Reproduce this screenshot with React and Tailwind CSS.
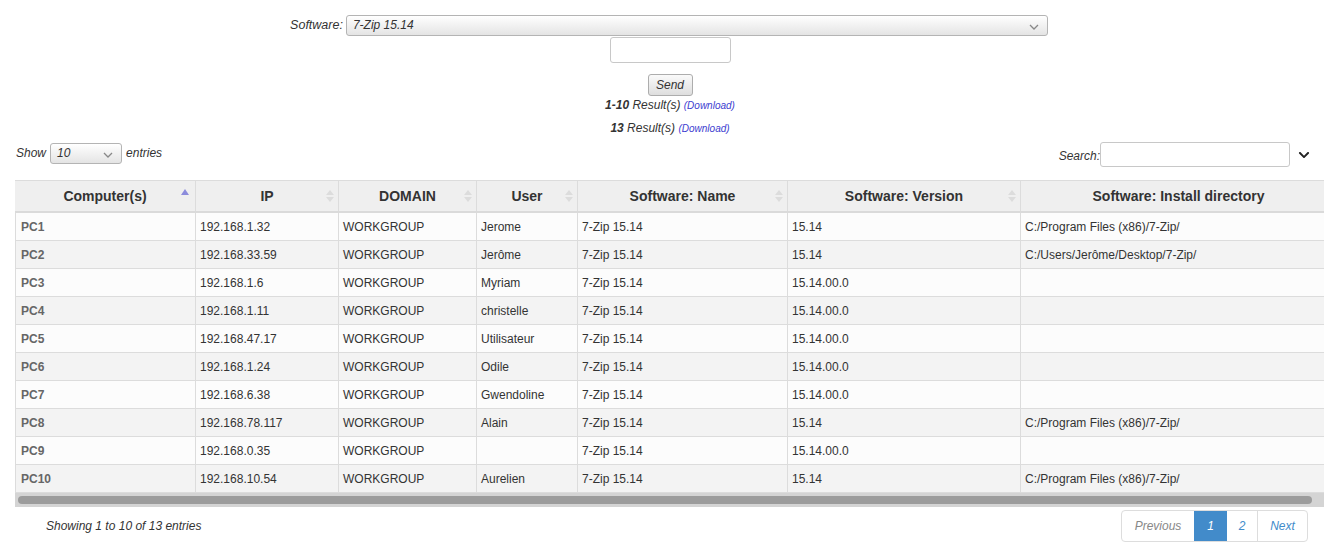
import { FaChevronDown } from "react-icons/fa";

const ROWS = [
  ["PC1", "192.168.1.32", "WORKGROUP", "Jerome", "7-Zip 15.14", "15.14", "C:/Program Files (x86)/7-Zip/"],
  ["PC2", "192.168.33.59", "WORKGROUP", "Jerôme", "7-Zip 15.14", "15.14", "C:/Users/Jerôme/Desktop/7-Zip/"],
  ["PC3", "192.168.1.6", "WORKGROUP", "Myriam", "7-Zip 15.14", "15.14.00.0", ""],
  ["PC4", "192.168.1.11", "WORKGROUP", "christelle", "7-Zip 15.14", "15.14.00.0", ""],
  ["PC5", "192.168.47.17", "WORKGROUP", "Utilisateur", "7-Zip 15.14", "15.14.00.0", ""],
  ["PC6", "192.168.1.24", "WORKGROUP", "Odile", "7-Zip 15.14", "15.14.00.0", ""],
  ["PC7", "192.168.6.38", "WORKGROUP", "Gwendoline", "7-Zip 15.14", "15.14.00.0", ""],
  ["PC8", "192.168.78.117", "WORKGROUP", "Alain", "7-Zip 15.14", "15.14", "C:/Program Files (x86)/7-Zip/"],
  ["PC9", "192.168.0.35", "WORKGROUP", "", "7-Zip 15.14", "15.14.00.0", ""],
  ["PC10", "192.168.10.54", "WORKGROUP", "Aurelien", "7-Zip 15.14", "15.14", "C:/Program Files (x86)/7-Zip/"],
];

const COLS = [
  { label: "Computer(s)", w: "w-[180px]", active: true },
  { label: "IP", w: "w-[143px]" },
  { label: "DOMAIN", w: "w-[138px]" },
  { label: "User", w: "w-[101px]" },
  { label: "Software: Name", w: "w-[210px]" },
  { label: "Software: Version", w: "w-[233px]" },
  { label: "Software: Install directory", w: "w-[316px]" },
];

const SortIcon = ({ active }) => {
  if (active) {
    return (
      <svg width="8" height="12" viewBox="0 0 8 12" className="absolute right-[6px] top-[7px]">
        <path d="M0 7 L4 1 L8 7 Z" fill="#8c8cdc" />
      </svg>
    );
  }
  return (
    <svg width="8" height="14" viewBox="0 0 8 14" className="absolute right-[4px] top-[8px]">
      <path d="M0 6 L4 1 L8 6 Z" fill="#dcdcdc" />
      <path d="M0 8 L4 13 L8 8 Z" fill="#dcdcdc" />
    </svg>
  );
};

const Chevron = () => (
  <svg width="10" height="6" viewBox="0 0 10 6" className="absolute right-[8px] top-[8px]">
    <path d="M1 1 L5 5 L9 1" stroke="#888" strokeWidth="1.3" fill="none" />
  </svg>
);

export default function App() {
  return (
    <div className="w-[1340px] h-[545px] bg-white overflow-hidden font-['Liberation_Sans',Arial,sans-serif] text-[#333]">
      {/* top form */}
      <div className="flex flex-col items-center pt-[15px]">
        <div className="flex items-center gap-[3px] h-[21px] -ml-[2px]">
          <span className="italic text-[12.5px] text-[#333]">Software:</span>
          <div className="relative w-[702px] h-[21px] border border-[#b4b4b4] rounded-[3px] bg-gradient-to-b from-white to-[#e4e4e4] italic text-[12px] pl-[6px] leading-[19px]">
            7-Zip 15.14
            <Chevron />
          </div>
        </div>
        <div className="w-[121px] h-[26px] border border-[#c8c8c8] rounded-[3px] mt-[1px] bg-white" />
        <div className="mt-[11px] w-[45px] h-[22px] border border-[#adadad] rounded-[3px] bg-gradient-to-b from-[#fafafa] to-[#dedede] italic text-[12px] flex items-center justify-center">
          Send
        </div>
        <div className="mt-0 h-[18px] italic text-[12px] leading-[18px]">
          <b>1-10</b> Result(s) <span className="text-[10px] text-[#3c3cd0]">(Download)</span>
        </div>
        <div className="mt-[5px] h-[18px] italic text-[12px] leading-[18px]">
          <b>13</b> Result(s) <span className="text-[10px] text-[#3c3cd0]">(Download)</span>
        </div>
      </div>

      {/* controls */}
      <div className="flex justify-between items-start px-[16px] mt-[5px]">
        <div className="flex items-center gap-[4px] h-[22px] italic text-[12px]">
          <span>Show</span>
          <div className="relative w-[72px] h-[21px] border border-[#b4b4b4] rounded-[3px] bg-gradient-to-b from-white to-[#e4e4e4] pl-[6px] leading-[19px]">
            10
            <Chevron />
          </div>
          <span>entries</span>
        </div>
        <div className="flex items-center h-[25px] italic text-[12px] mr-[14px]">
          <span className="mt-[2px]">Search:</span>
          <div className="w-[190px] h-[25px] border border-[#c8c8c8] rounded-[3px] bg-white" />
          <FaChevronDown className="ml-[8px] text-[12px] text-[#222]" />
        </div>
      </div>

      {/* table */}
      <div className="mt-[13px] ml-[15px] w-[1309px] overflow-hidden">
        <div className="flex border-t border-[#dcdcdc] bg-[#efefef] border-b-2 border-b-[#dadada] h-[33px]">
          {COLS.map((c) => (
            <div
              key={c.label}
              className={`${c.w} shrink-0 relative border-l border-[#dcdcdc] first:border-l-0 flex items-center justify-center text-[14px] font-bold text-[#333]`}
            >
              {c.label}
              <SortIcon active={c.active} />
            </div>
          ))}
        </div>
        {ROWS.map((r, i) => (
          <div key={r[0]} className={`flex h-[28px] border-b border-[#dcdcdc] ${i % 2 ? "bg-[#f3f3f3]" : "bg-[#fcfcfc]"}`}>
            {r.map((v, j) => (
              <div
                key={j}
                className={`${COLS[j].w} shrink-0 border-l border-[#dcdcdc] flex items-center text-[12px] whitespace-nowrap ${j === 0 ? "pl-[5px] font-bold text-[#666]" : "pl-[4px] text-[#333]"}`}
              >
                {v}
              </div>
            ))}
          </div>
        ))}
        <div className="h-[14px] bg-[#d4d4d4] flex items-center px-[3px]">
          <div className="w-[1294px] h-[8px] rounded-full bg-[#9c9c9c]" />
        </div>
      </div>

      {/* footer */}
      <div className="flex justify-between items-start ml-[46px] mr-[32px] mt-[3px]">
        <div className="italic text-[12px] mt-[7px]">Showing 1 to 10 of 13 entries</div>
        <div className="flex h-[32px] border border-[#dddddd] rounded-[4px] overflow-hidden italic text-[12px]">
          <div className="w-[72px] flex items-center justify-center text-[#888]">Previous</div>
          <div className="w-[33px] flex items-center justify-center bg-[#428bca] text-white">1</div>
          <div className="w-[31px] flex items-center justify-center text-[#428bca] border-r border-[#dddddd]">2</div>
          <div className="w-[49px] flex items-center justify-center text-[#428bca]">Next</div>
        </div>
      </div>
    </div>
  );
}
